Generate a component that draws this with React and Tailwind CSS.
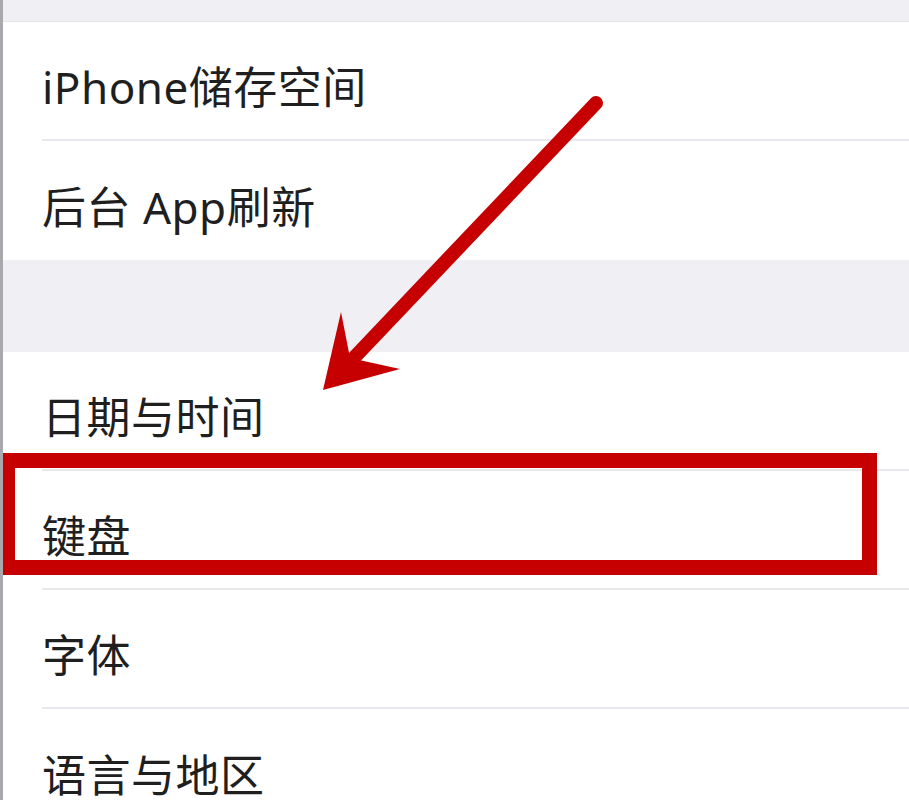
const sections = [
  ['iPhone储存空间', '后台 App刷新'],
  ['日期与时间', '键盘', '字体', '语言与地区'],
];

function Row({ label, last }) {
  return (
    <div className="h-[119px] pl-[39px] flex bg-white">
      <div
        className={`flex-1 flex items-center pt-[12px] ${
          last ? '' : 'border-b-2 border-[#e9e9ed]'
        }`}
      >
        <span className="text-[44px] leading-none text-[#1f1f1f] tracking-[0.5px]">{label}</span>
      </div>
    </div>
  );
}

export default function App() {
  return (
    <div
      className="relative w-[909px] h-[800px] overflow-hidden bg-[#efeff4] border-l-[3px] border-[#a9a9ad]"
      style={{ fontFamily: "'Noto Sans', 'Noto Sans CJK SC', sans-serif" }}
    >
      <div className="h-[22px] bg-[#efeff4] border-b border-[#e4e4e8]" />
      <div className="flex flex-col">
        {sections[0].map((l, i) => (
          <Row key={l} label={l} last={i === sections[0].length - 1} />
        ))}
      </div>
      <div className="h-[92px] bg-[#efeff4]" />
      <div className="flex flex-col">
        {sections[1].map((l, i) => (
          <Row key={l} label={l} last={i === sections[1].length - 1} />
        ))}
      </div>

      {/* red highlight box */}
      <div className="absolute left-[-3px] top-[453px] w-[877px] h-[122px] border-[15px] border-[#c60000]" />

      {/* red arrow */}
      <svg className="absolute left-[-3px] top-0" width="909" height="800" viewBox="0 0 909 800">
        <line x1="596" y1="103" x2="350" y2="362" stroke="#c60000" strokeWidth="14" strokeLinecap="round" />
        <polygon points="323,390 341,312 350,358 400,369" fill="#c60000" />
      </svg>
    </div>
  );
}
